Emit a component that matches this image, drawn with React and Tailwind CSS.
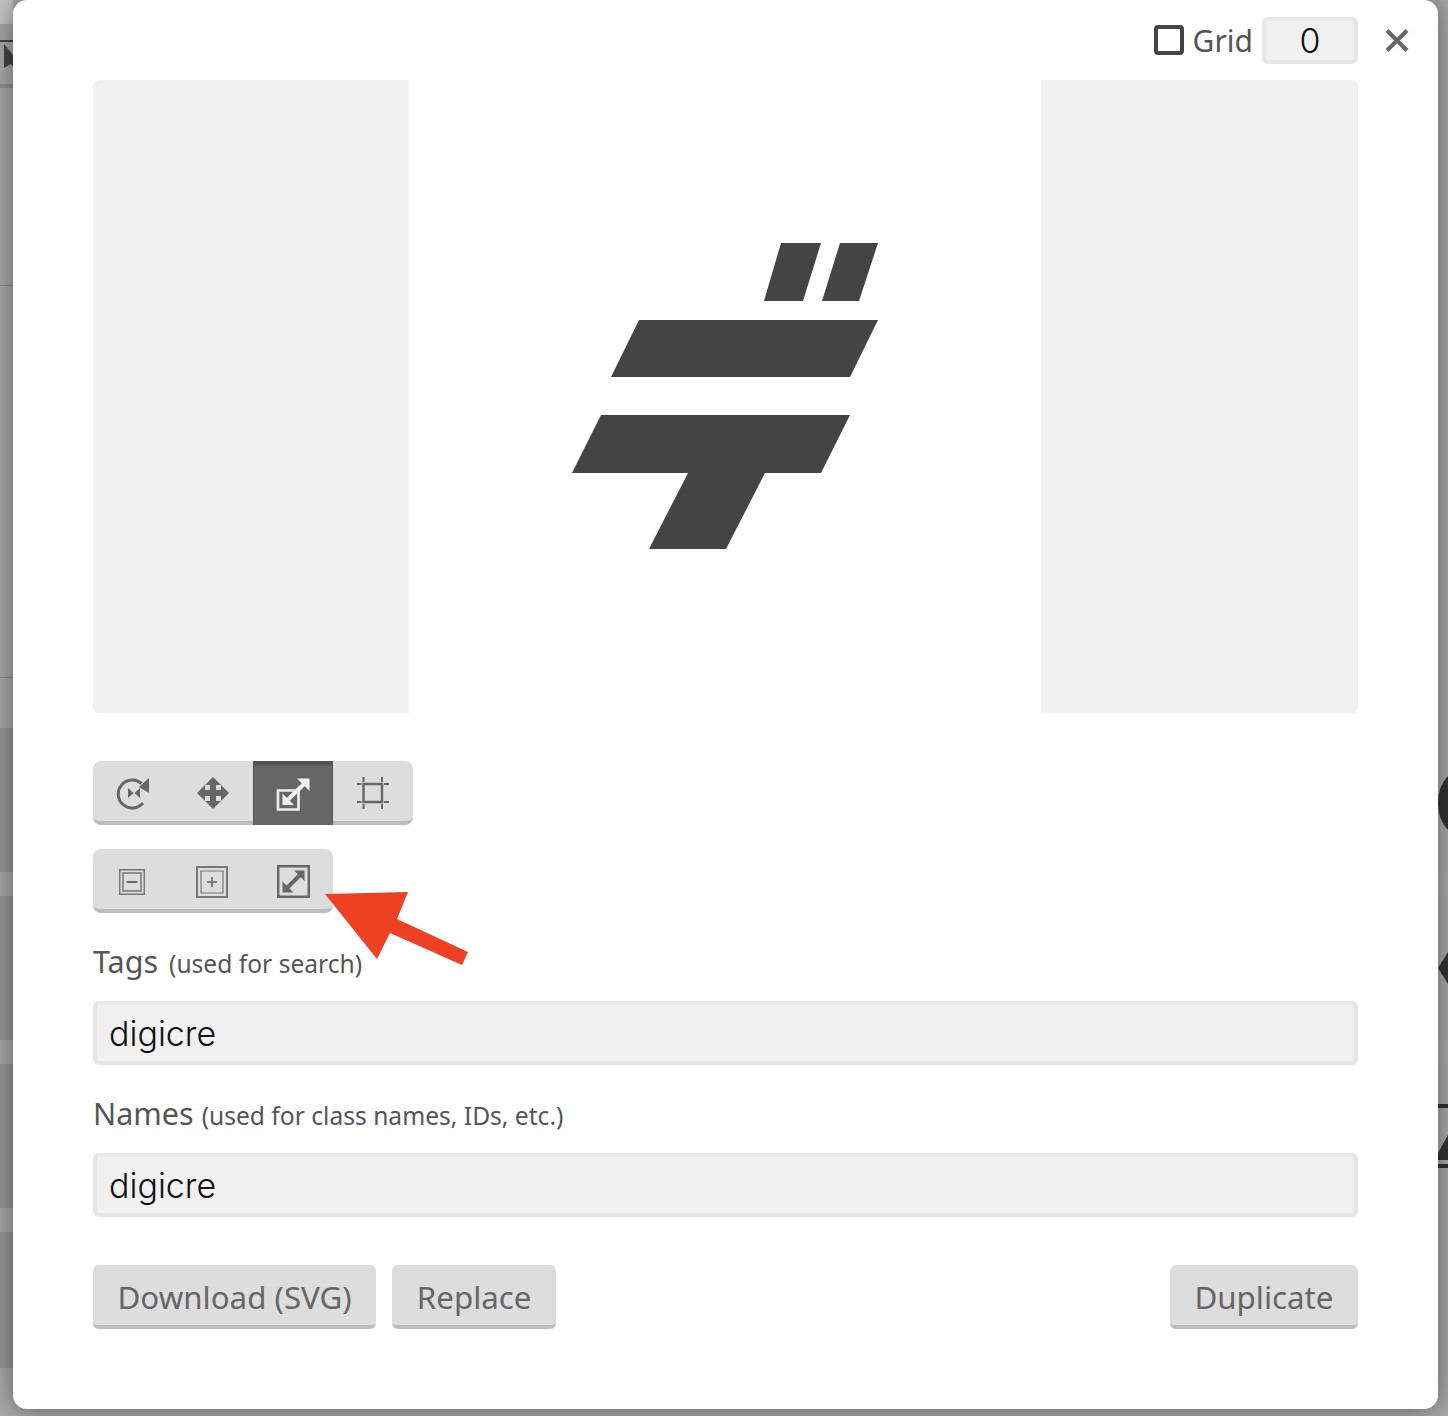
import React from "react";

const uiFont = { fontFamily: '"Noto Sans", sans-serif' };
const fieldFont = { fontFamily: 'Inter, "Liberation Sans", sans-serif' };

const RotateIcon = () => (
  <svg width="34" height="34" viewBox="0 0 34 34" fill="none">
    <path d="M27 27A14 14 0 1 1 25.5 7.5" stroke="#666" strokeWidth="3" />
    <path d="M33 2V17L23 11Z" fill="#666" />
    <path d="M12 12L17.5 17L12 22ZM24 12L18.5 17L24 22Z" fill="#666" />
  </svg>
);

const MoveIcon = () => (
  <svg width="32" height="32" viewBox="0 0 32 32">
    <path d="M16 0L32 16L16 32L0 16Z" fill="#666" />
    <path d="M8 8H13V13H8ZM19 8H24V13H19ZM8 19H13V24H8ZM19 19H24V24H19Z" fill="#ddd" />
  </svg>
);

const ScaleIcon = () => (
  <svg width="34" height="34" viewBox="0 0 34 34" fill="none">
    <path d="M2 12.5H22.5V31.5H2Z" stroke="#f0f0f0" strokeWidth="2.6" />
    <path d="M21 0.5H33.5V13Z" fill="#f0f0f0" />
    <path d="M6.5 15.5V27H18Z" fill="#f0f0f0" />
    <path d="M28 6L10 23.5" stroke="#f0f0f0" strokeWidth="4" />
  </svg>
);

const CropIcon = () => (
  <svg width="34" height="34" viewBox="0 0 34 34" fill="none" stroke="#666">
    <path d="M7.5 8H26V26H7.5Z" strokeWidth="2.4" />
    <path
      d="M1 8H5.5M28 8H33M1 26H5.5M28 26H33M7.5 1V6M26 1V6M7.5 28V33M26 28V33"
      strokeWidth="2"
    />
  </svg>
);

const ShrinkIcon = () => (
  <svg className="mr-[3px] mt-[2px]" width="26" height="26" viewBox="0 0 26 26" fill="none" stroke="#777">
    <path d="M0.75 0.75H25.25V25.25H0.75Z" strokeWidth="1.5" />
    <path d="M4 4H22V22H4Z" strokeWidth="1.5" />
    <path d="M7.5 13H18.5" strokeWidth="2" stroke="#666" />
  </svg>
);

const GrowIcon = () => (
  <svg className="mr-[3px] mt-[2px]" width="32" height="32" viewBox="0 0 32 32" fill="none" stroke="#777">
    <path d="M1 1H31V31H1Z" strokeWidth="2" />
    <path d="M5 5H27V27H5Z" strokeWidth="1.2" />
    <path d="M11 16H21M16 11V21" strokeWidth="1.6" stroke="#666" />
  </svg>
);

const FitIcon = () => (
  <svg width="33" height="33" viewBox="0 0 33 33" fill="none">
    <path d="M1.2 1.2H31.8V31.8H1.2Z" stroke="#666" strokeWidth="2.4" />
    <path d="M17 5.5H27.5V16Z" fill="#666" />
    <path d="M5.5 16.5V27.5H16.5Z" fill="#666" />
    <path d="M23 10L10 23" stroke="#666" strokeWidth="4" />
  </svg>
);

const ToolButton = ({ active, children, rounded }) => (
  <div
    className={`flex h-[64px] w-[80px] items-center justify-center ${rounded} ${
      active
        ? "border-x border-t-4 border-[#555] bg-[#666]"
        : "border-b-4 border-[#bbb] bg-[#ddd] pt-1"
    }`}
  >
    {children}
  </div>
);

const Label = ({ title, hint, gap }) => (
  <div className="h-[40px] text-[#555]" style={uiFont}>
    <span className={`${gap} text-[30.5px] leading-[40px]`}>{title}</span>
    <span className="text-[24.6px] leading-[40px]">{hint}</span>
  </div>
);

const TextField = ({ value }) => (
  <div
    className="flex h-[64px] items-center rounded-md border-4 border-[#e6e6e6] bg-[#f0f0f0] pl-3 text-[34px] font-light text-[#111]"
    style={fieldFont}
  >
    {value}
  </div>
);

const ActionButton = ({ children }) => (
  <div
    className="flex h-[64px] items-center rounded-md border-b-4 border-[#bbb] bg-[#ddd] px-[24.5px] pt-1 text-[31.3px] text-[#666]"
    style={uiFont}
  >
    {children}
  </div>
);

const Backdrop = () => (
  <div className="absolute inset-0 overflow-hidden bg-[#a8a8a8]">
    {/* left strip behind the dialog */}
    <div className="absolute left-0 top-0 h-[24px] w-[13px] bg-[#c4c4c4]" />
    <div className="absolute left-0 top-[24px] h-[16px] w-[13px] bg-[#a6a6a6]" />
    <div className="absolute left-0 top-[40px] h-[2px] w-[13px] bg-[#444]" />
    <div className="absolute left-0 top-[84px] h-[4px] w-[13px] bg-[#8e8e8e]" />
    <div className="absolute left-0 top-[285px] h-[1px] w-[13px] bg-[#888]" />
    <div className="absolute left-0 top-[677px] h-[1px] w-[13px] bg-[#888]" />
    <div className="absolute left-0 top-[728px] h-[144px] w-[13px] bg-[#959595]" />
    <div className="absolute left-0 top-[896px] h-[144px] w-[13px] bg-[#959595]" />
    <div className="absolute left-0 top-[1064px] h-[144px] w-[13px] bg-[#959595]" />
    <div className="absolute left-0 top-[1232px] h-[136px] w-[13px] bg-[#959595]" />
    <svg className="absolute left-[4px] top-[44px]" width="10" height="26" viewBox="0 0 10 26">
      <path d="M0 0L10 12V24L7 20L0 24Z" fill="#444" />
    </svg>
    {/* right strip */}
    <div className="absolute right-0 top-[872px] h-[24px] w-[10px] bg-[#aaa]" />
    <div className="absolute right-0 top-[1040px] h-[24px] w-[10px] bg-[#aaa]" />
    <svg className="absolute right-0 top-[776px]" width="10" height="54" viewBox="0 0 10 54">
      <path d="M10 0Q0 10 0 27Q0 44 10 54Z" fill="#333" />
    </svg>
    <svg className="absolute right-0 top-[952px]" width="10" height="32" viewBox="0 0 10 32">
      <path d="M10 0L0 16L10 32Z" fill="#333" />
    </svg>
    <div className="absolute right-0 top-[1104px] h-[4px] w-[10px] bg-[#333]" />
    <svg className="absolute right-0 top-[1135px]" width="10" height="25" viewBox="0 0 10 25">
      <path d="M10 0L0 18V25H10Z" fill="#333" />
    </svg>
    <div className="absolute right-0 top-[1164px] h-[4px] w-[10px] bg-[#333]" />
  </div>
);

const App = () => {
  return (
    <div className="relative h-[1416px] w-[1448px] overflow-hidden">
      <Backdrop />

      <div className="relative ml-[13px] h-[1409px] w-[1425px] rounded-[14px] bg-white px-[80px] shadow-[0_0_24px_rgba(0,0,0,0.45)]">
        {/* Top row */}
        <div className="relative flex h-[80px] items-center justify-end">
          <div className="mr-[9px] h-[30px] w-[30px] rounded border-4 border-[#444]" />
          <span className="mr-[9px] text-[30px] text-[#555]" style={uiFont}>
            Grid
          </span>
          <div
            className="flex h-[47px] w-[96px] items-center justify-center rounded-md border-4 border-[#e6e6e6] bg-[#f0f0f0] text-[34px] font-light text-[#111]"
            style={fieldFont}
          >
            0
          </div>
          <svg className="absolute left-[1292px] top-[29px]" width="24" height="23" viewBox="0 0 24 23">
            <path d="M2 1.5L22 21.5M22 1.5L2 21.5" stroke="#666" strokeWidth="4" />
          </svg>
        </div>

        {/* Preview */}
        <div className="flex h-[633px] rounded-md bg-[#f0f0f0] pl-[316px]">
          <div className="flex h-full w-[632px] items-center justify-center bg-white pb-[2px]">
            <svg width="306" height="306" viewBox="572 243 306 306">
              <path d="M781 243H821L803 301H764Z" fill="#444" />
              <path d="M840 243H878L859 301H822Z" fill="#444" />
              <path d="M639 320H878L850 377H611Z" fill="#444" />
              <path d="M601 415H850L821 473H765L726 549H649L688 473H572Z" fill="#444" />
            </svg>
          </div>
        </div>

        {/* Transform tools */}
        <div className="mt-[48px] flex w-[320px]">
          <ToolButton rounded="rounded-l-lg"><RotateIcon /></ToolButton>
          <ToolButton rounded=""><MoveIcon /></ToolButton>
          <ToolButton active rounded=""><ScaleIcon /></ToolButton>
          <ToolButton rounded="rounded-r-lg"><CropIcon /></ToolButton>
        </div>
        <div className="mt-[24px] flex w-[240px]">
          <ToolButton rounded="rounded-l-lg"><ShrinkIcon /></ToolButton>
          <ToolButton rounded=""><GrowIcon /></ToolButton>
          <ToolButton rounded="rounded-r-lg"><FitIcon /></ToolButton>
        </div>

        {/* Fields */}
        <div className="mt-[28px]">
          <Label title="Tags" hint="(used for search)" gap="mr-[11px]" />
        </div>
        <div className="mt-[20px]">
          <TextField value="digicre" />
        </div>
        <div className="mt-[28px]">
          <Label title="Names" hint="(used for class names, IDs, etc.)" gap="mr-[8px]" />
        </div>
        <div className="mt-[20px]">
          <TextField value="digicre" />
        </div>

        {/* Actions */}
        <div className="mt-[48px] flex items-center gap-4">
          <ActionButton>Download (SVG)</ActionButton>
          <ActionButton>Replace</ActionButton>
          <div className="flex-1" />
          <ActionButton>Duplicate</ActionButton>
        </div>

        {/* Annotation arrow over the second toolbar */}
        <svg className="absolute left-[312px] top-[891px]" width="156" height="75" viewBox="325 891 156 75">
          <path d="M325 894L408 892L397 919L468 952L462 965L390 933L377 959Z" fill="#ee4023" />
        </svg>
      </div>
    </div>
  );
};

export default App;
